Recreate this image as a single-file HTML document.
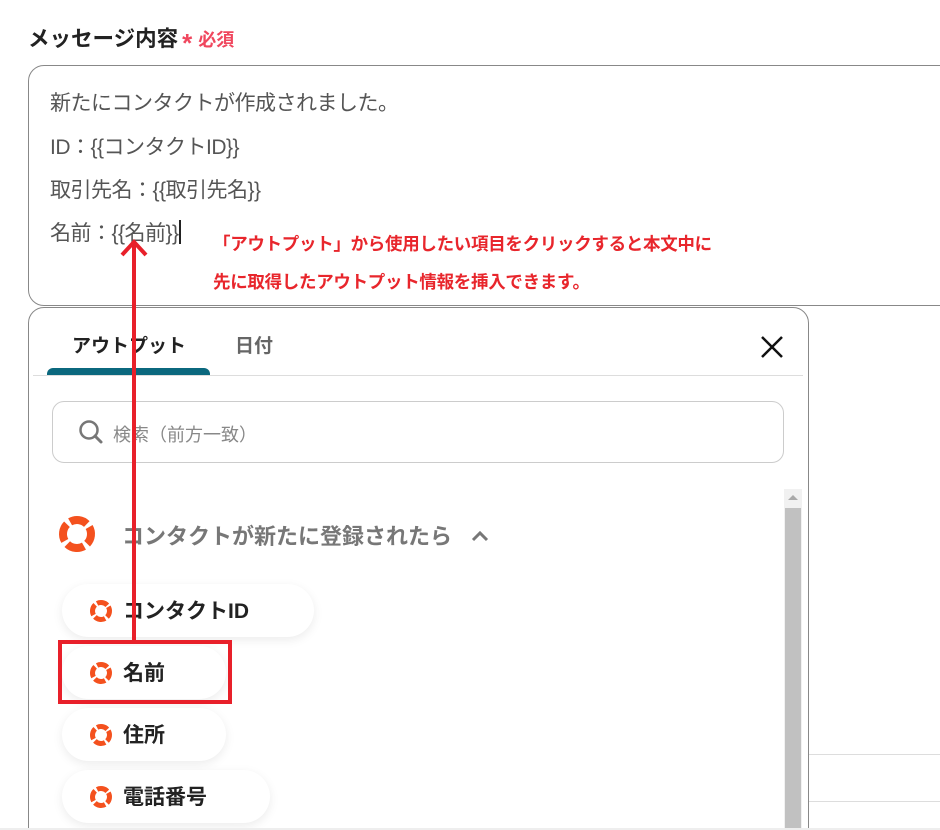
<!DOCTYPE html>
<html><head><meta charset="utf-8"><style>
*{margin:0;padding:0;box-sizing:border-box}
html,body{width:940px;height:830px;overflow:hidden}
body{background:#fff;font-family:"Liberation Sans","Noto Sans CJK JP",sans-serif;position:relative}
.a{position:absolute;white-space:nowrap}
.ta{position:absolute;left:28px;top:65px;width:930px;height:241px;border:1.5px solid #888;border-radius:16px}
.ln{position:absolute;left:50px;font-size:21px;color:#555;letter-spacing:-0.5px}
.note{position:absolute;left:213px;font-size:17.5px;font-weight:bold;color:#e8262c;letter-spacing:-0.3px}
.pop{position:absolute;left:28px;top:307px;width:781px;height:560px;border:1.5px solid #888;border-radius:16px;background:#fff}
.pill{position:absolute;left:62px;height:53px;border-radius:27px;background:#fff;box-shadow:0 3px 10px rgba(0,0,0,.08);font-size:21px;font-weight:bold;color:#222;line-height:56px;padding-left:61px}
.pill svg{position:absolute;left:27px;top:15px}
</style></head><body>
<div class="a" style="left:28px;top:22px;font-size:21.5px;font-weight:bold;color:#222">メッセージ内容<span style="color:#f0475e;font-size:26px;margin-left:4px;vertical-align:-6px">*</span><span style="color:#f0475e;font-size:18px;margin-left:6px">必須</span></div>
<div class="ta"></div>
<div class="ln" style="top:87px">新たにコンタクトが作成されました。</div>
<div class="ln" style="top:131px">ID：{{コンタクトID}}</div>
<div class="ln" style="top:174px">取引先名：{{取引先名}}</div>
<div class="ln" style="top:217px">名前：{{名前}}<span style="display:inline-block;width:2px;height:24px;background:#222;vertical-align:-4px"></span></div>
<div class="note" style="top:231px">「アウトプット」から使用したい項目をクリックすると本文中に</div>
<div class="note" style="top:269px">先に取得したアウトプット情報を挿入できます。</div>
<div class="pop">
 <div class="a" style="left:43px;top:23px;font-size:19px;font-weight:bold;color:#222">アウトプット</div>
 <div class="a" style="left:206px;top:23px;font-size:19px;font-weight:bold;color:#666">日付</div>
 <div class="a" style="left:18px;top:60px;width:163px;height:8px;background:#0b687e;border-radius:6px 6px 0 0"></div>
 <div class="a" style="left:4px;top:67px;width:770px;height:1px;background:#ddd"></div>
 <svg class="a" style="left:731px;top:27px" width="24" height="24" viewBox="0 0 24 24"><path d="M2 2L22 22M22 2L2 22" stroke="#111" stroke-width="2.5"/></svg>
 <div class="a" style="left:23px;top:93px;width:732px;height:62px;border:1px solid #ccc;border-radius:12px"></div>
 <svg class="a" style="left:49px;top:111px" width="26" height="26" viewBox="0 0 26 26"><circle cx="11" cy="11" r="8.5" fill="none" stroke="#777" stroke-width="2.5"/><path d="M17 17L23 23" stroke="#777" stroke-width="3" stroke-linecap="round"/></svg>
 <div class="a" style="left:84px;top:113px;font-size:18px;color:#888">検索（前方一致）</div>
 <div class="a" style="left:755px;top:181px;width:18px;height:380px;background:#f1f1f1"></div>
 <div class="a" style="left:756px;top:200px;width:16px;height:360px;background:#c1c1c1"></div>
 <div class="a" style="left:759px;top:187px;width:0;height:0;border-left:5px solid transparent;border-right:5px solid transparent;border-bottom:5px solid #aaa"></div>
 <svg class="a" style="left:29px;top:207px" width="38" height="38" viewBox="0 0 38 38"><circle cx="19" cy="19" r="14" fill="none" stroke="#f4511e" stroke-width="8" stroke-dasharray="18 4" transform="rotate(-30 19 19)"/></svg>
 <div class="a" style="left:93px;top:211px;font-size:22px;font-weight:bold;color:#777">コンタクトが新たに登録されたら</div>
 <svg class="a" style="left:441px;top:221px" width="20" height="14" viewBox="0 0 20 14"><path d="M3 11L10 4L17 11" fill="none" stroke="#777" stroke-width="3"/></svg>
</div>
<div class="pill" style="top:584px;width:252px"><svg width="24" height="24" viewBox="0 0 24 24"><circle cx="12" cy="12" r="8.5" fill="none" stroke="#f4511e" stroke-width="5" stroke-dasharray="11 2.4" transform="rotate(-30 12 12)"/></svg>コンタクトID</div>
<div class="pill" style="top:646px;width:164px"><svg width="24" height="24" viewBox="0 0 24 24"><circle cx="12" cy="12" r="8.5" fill="none" stroke="#f4511e" stroke-width="5" stroke-dasharray="11 2.4" transform="rotate(-30 12 12)"/></svg>名前</div>
<div class="pill" style="top:708px;width:164px"><svg width="24" height="24" viewBox="0 0 24 24"><circle cx="12" cy="12" r="8.5" fill="none" stroke="#f4511e" stroke-width="5" stroke-dasharray="11 2.4" transform="rotate(-30 12 12)"/></svg>住所</div>
<div class="pill" style="top:770px;width:208px"><svg width="24" height="24" viewBox="0 0 24 24"><circle cx="12" cy="12" r="8.5" fill="none" stroke="#f4511e" stroke-width="5" stroke-dasharray="11 2.4" transform="rotate(-30 12 12)"/></svg>電話番号</div>
<div class="a" style="left:58px;top:640px;width:174px;height:64px;border:4px solid #e8202a"></div>
<div class="a" style="left:809px;top:754px;width:131px;height:1px;background:#ddd"></div>
<div class="a" style="left:809px;top:801px;width:131px;height:1px;background:#ddd"></div>
<div class="a" style="left:0;top:828px;width:940px;height:2px;background:#eee"></div>
<svg class="a" style="left:115px;top:235px" width="40" height="420" viewBox="0 0 40 420"><path d="M19 6V409" stroke="#e8202a" stroke-width="4"/><path d="M7 20L19 7L31 20" fill="none" stroke="#e8202a" stroke-width="4"/></svg>
</body></html>
